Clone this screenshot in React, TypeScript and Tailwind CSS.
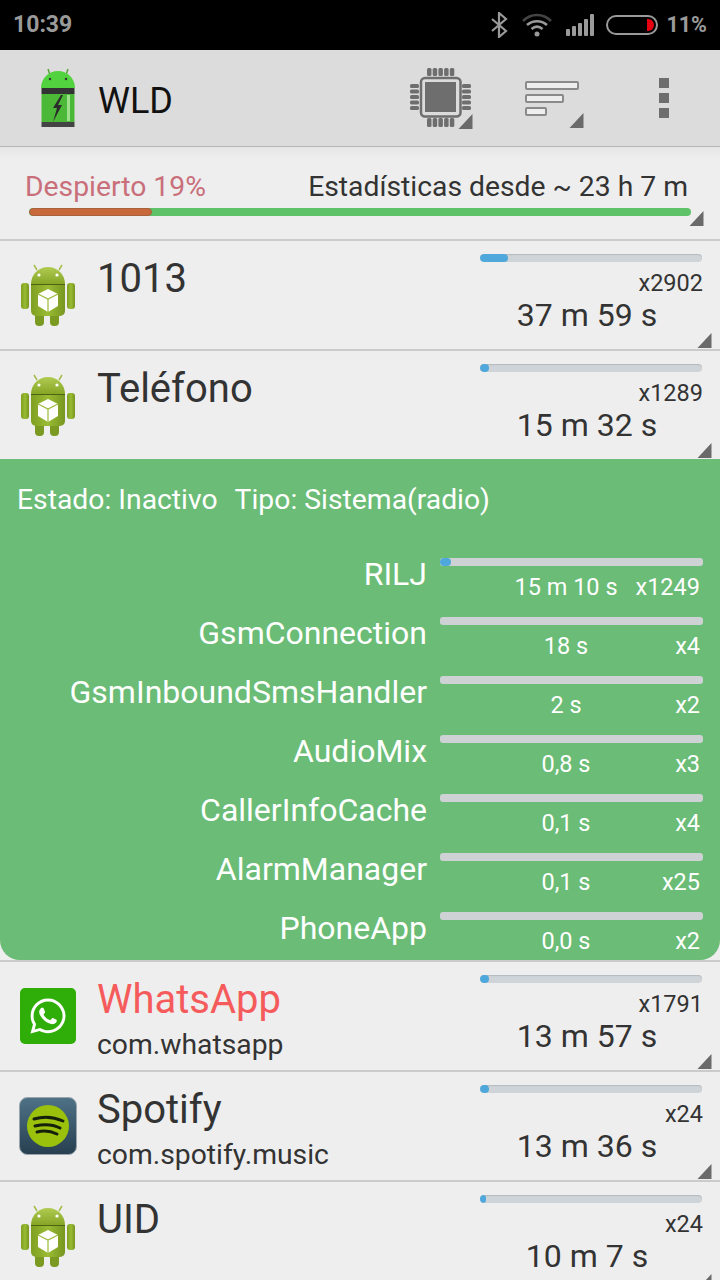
import type { ReactNode } from "react";
import { FaWhatsapp } from "react-icons/fa";

const DETAILS = [
  { name: "RILJ", time: "15 m 10 s", count: "x1249", active: true },
  { name: "GsmConnection", time: "18 s", count: "x4" },
  { name: "GsmInboundSmsHandler", time: "2 s", count: "x2" },
  { name: "AudioMix", time: "0,8 s", count: "x3" },
  { name: "CallerInfoCache", time: "0,1 s", count: "x4" },
  { name: "AlarmManager", time: "0,1 s", count: "x25" },
  { name: "PhoneApp", time: "0,0 s", count: "x2" },
];

function Corner({ className }: { className: string }) {
  return (
    <svg viewBox="0 0 14 15" className={`absolute w-[15px] h-[15px] ${className}`}>
      <path d="M14 0V15H0Z" fill="#6a6a6a" />
    </svg>
  );
}

function AndroidIcon() {
  return (
    <svg viewBox="0 0 54 62" className="w-[54px] h-[62px]">
      <defs>
        <linearGradient id="droid" x1="0" y1="0" x2="1" y2="0">
          <stop offset="0" stopColor="#7f9f22" />
          <stop offset="0.5" stopColor="#9abb33" />
          <stop offset="1" stopColor="#769620" />
        </linearGradient>
        <linearGradient id="droidHead" x1="0" y1="0" x2="0" y2="1">
          <stop offset="0" stopColor="#b0cb52" />
          <stop offset="1" stopColor="#86a626" />
        </linearGradient>
      </defs>
      <path d="M16 6l-3-5M38 6l3-5" stroke="#a3bd4a" strokeWidth="1.5" />
      <path d="M10 20C10 10 18 3 27 3s17 7 17 17Z" fill="url(#droidHead)" />
      <circle cx="18" cy="11" r="1.6" fill="#fff" />
      <circle cx="36" cy="11" r="1.6" fill="#fff" />
      <rect x="0" y="19" width="8" height="26" rx="3" fill="url(#droid)" />
      <rect x="46" y="19" width="8" height="26" rx="3" fill="url(#droid)" />
      <rect x="14" y="46" width="9" height="16" rx="4" fill="#7a9a22" />
      <rect x="29" y="46" width="9" height="16" rx="4" fill="#7a9a22" />
      <rect x="10" y="20" width="34" height="1" fill="#4d6312" />
      <path d="M10 21H44V47a5 5 0 0 1-5 5H15a5 5 0 0 1-5-5Z" fill="url(#droid)" />
      <path d="M27 25l10 5v12l-10 6-10-6V30Z" fill="#fff" />
      <path d="M17 30l10 5 10-5M27 35v13" stroke="#9cba38" strokeWidth="1.2" fill="none" />
    </svg>
  );
}

function BatteryDroid() {
  return (
    <svg viewBox="0 0 36 60" className="w-[36px] h-[60px]">
      <path d="M10 7L8 1M26 7l2-6" stroke="#5aa03a" strokeWidth="1.5" />
      <path d="M1 20C1 10 9 3 18 3s17 7 17 17Z" fill="#52d23e" />
      <circle cx="10" cy="11" r="1.2" fill="#333" />
      <circle cx="26" cy="11" r="1.2" fill="#333" />
      <rect x="1.5" y="20" width="33" height="6" fill="#333" />
      <rect x="1.5" y="26" width="33" height="28" fill="#4cb838" />
      <rect x="27" y="27" width="3" height="26" fill="#9ee08e" />
      <rect x="1.5" y="54" width="33" height="5" fill="#444" />
      <path d="M21 27l-8 13h4l-4 14 9-17h-4l5-10Z" fill="#2b2b2b" />
    </svg>
  );
}

function SpotifyIcon() {
  return (
    <svg viewBox="0 0 58 58" className="w-[58px] h-[58px]">
      <defs>
        <linearGradient id="spot" x1="0" y1="0" x2="0" y2="1">
          <stop offset="0" stopColor="#4f7287" />
          <stop offset="1" stopColor="#273f50" />
        </linearGradient>
      </defs>
      <rect x="0.5" y="0.5" width="57" height="57" rx="8" fill="url(#spot)" stroke="#9aa5ab" />
      <circle cx="29" cy="29" r="21" fill="#9ac20c" />
      <path d="M15 22c10-3 20-2 29 2M16 29c9-2 17-2 25 2M18 35c7-2 14-1 20 2" stroke="#16210c" strokeWidth="3" strokeLinecap="round" fill="none" />
    </svg>
  );
}

function WhatsAppIcon() {
  return (
    <div className="w-[56px] h-[56px] rounded-[5px] bg-[#2fae09] flex items-center justify-center">
      <FaWhatsapp className="text-white w-[40px] h-[40px]" />
    </div>
  );
}

function Row({
  icon,
  title,
  sub,
  count,
  time,
  pct = 9,
  titleColor = "text-[#333]",
}: {
  icon: ReactNode;
  title: string;
  sub?: string;
  count: string;
  time: string;
  pct?: number;
  titleColor?: string;
}) {
  return (
    <div className="relative h-[110px] shrink-0 border-t-2 border-[#cbcbcb] bg-[#eeeeee] flex">
      <div className="w-[97px] shrink-0 flex items-center justify-center pr-[1px]">{icon}</div>
      <div className="flex-1 pt-[13px]">
        <div className={`text-[40px] leading-[50px] ${titleColor}`}>{title}</div>
        {sub && <div className="text-[28.3px] leading-[32px] text-[#333] mt-[4px]">{sub}</div>}
      </div>
      <div className="w-[240px] shrink-0 pt-[13px] pr-[17px]">
        <div className="h-[8px] w-[222px] rounded-full bg-[#cfd4d8] shadow-[inset_0_1px_1px_#b4babf] overflow-hidden">
          <div className="h-full rounded-full bg-[#4fa8dc]" style={{ width: `${pct}px` }} />
        </div>
        <div className="text-right text-[23.5px] leading-[28px] text-[#333] mt-[7px]">{count}</div>
        <div className="text-center text-[32px] leading-[36px] text-[#333] pr-[9px]">{time}</div>
      </div>
      <Corner className="right-[8px] bottom-[1px]" />
    </div>
  );
}

function DetailRow({ name, time, count, active }: (typeof DETAILS)[number]) {
  return (
    <div className="h-[59px] flex pr-[17px]">
      <div className="w-[427px] shrink-0 text-right text-[32px] leading-[32px] text-white pt-[16px]">{name}</div>
      <div className="flex-1 ml-[13px] pt-[16px]">
        <div className="h-[8px] rounded-[3px] bg-[#cfd2d5] overflow-hidden">
          {active && <div className="h-full w-[11px] rounded-full bg-[#4fa8dc]" />}
        </div>
        <div className="flex text-[23.5px] leading-[28px] text-white mt-[7px] pr-[3px]">
          <span className="flex-1 text-center pl-[60px]">{time}</span>
          <span className="w-[68px] text-right">{count}</span>
        </div>
      </div>
    </div>
  );
}

export default function App() {
  return (
    <div className="w-[720px] h-[1280px] overflow-hidden flex flex-col bg-[#eeeeee] font-['Roboto',sans-serif]">
      {/* Status bar */}
      <div className="h-[50px] shrink-0 bg-black flex items-center text-[#9a9a9a] font-bold text-[23px] pl-[13px] pr-[13px]">
        <span>10:39</span>
        <div className="ml-auto flex items-center">
          <svg viewBox="0 0 18 26" className="w-[18px] h-[26px]" fill="none" stroke="#9a9a9a" strokeWidth="2.2">
            <path d="M2 7l14 12-7 6V1l7 6L2 19" />
          </svg>
          <svg viewBox="0 0 32 26" className="w-[32px] h-[26px] ml-[13px]" fill="none" strokeWidth="2.6">
            <path d="M2 9c8-8 20-8 28 0" stroke="#444" />
            <path d="M6 13c6-5 14-5 20 0M10.5 17c3.500-3 7.500-3 11 0" stroke="#9a9a9a" />
            <circle cx="16" cy="22" r="2.500" fill="#9a9a9a" stroke="none" />
          </svg>
          <svg viewBox="0 0 28 22" className="w-[28px] h-[22px] ml-[13px]" fill="#9a9a9a">
            <rect x="0" y="15" width="4" height="7" rx="1" />
            <rect x="6" y="12" width="4" height="10" rx="1" />
            <rect x="12" y="9" width="4" height="13" rx="1" />
            <rect x="18" y="5" width="4" height="17" rx="1" />
            <rect x="24" y="0" width="4" height="22" rx="1" />
          </svg>
          <div className="relative ml-[12px] w-[52px] h-[20px] rounded-full border-2 border-[#9a9a9a] overflow-hidden">
            <div className="absolute right-[2px] top-[2px] w-[7px] h-[12px] rounded-r-full bg-[#e60012]" />
          </div>
          <span className="ml-[8px] text-[21.5px]">11%</span>
        </div>
      </div>

      {/* Toolbar */}
      <div className="relative h-[97px] shrink-0 bg-[#dcdcdc] border-b border-[#b4b4b4] flex items-center">
        <div className="ml-[40px] w-[36px] flex">
          <BatteryDroid />
        </div>
        <span className="ml-[22px] mt-[5px] text-[36px] text-[#111]">WLD</span>
        <div className="relative ml-auto mr-[248px] w-[62px] h-[60px]">
          <svg viewBox="0 0 62 60" className="w-[62px] h-[60px]" fill="#6e6e6e">
            {[0, 1, 2, 3, 4].map((i) => (
              <rect key={`t${i}`} x={17 + i * 5.7} y="0" width="4.500" height="8" rx="1.500" />
            ))}
            {[0, 1, 2, 3, 4].map((i) => (
              <rect key={`b${i}`} x={17 + i * 5.7} y="50" width="4.500" height="9" rx="1.500" />
            ))}
            {[0, 1, 2, 3, 4].map((i) => (
              <rect key={`l${i}`} x="0" y={16 + i * 5.5} width="9" height="4" rx="1.500" />
            ))}
            {[0, 1, 2, 3, 4].map((i) => (
              <rect key={`r${i}`} x="52" y={16 + i * 5.5} width="9" height="4" rx="1.500" />
            ))}
            <rect x="11" y="10" width="39.500" height="38.500" rx="4" fill="none" stroke="#6e6e6e" strokeWidth="2.500" />
            <rect x="15" y="14" width="31" height="30" fill="#6e6e6e" />
          </svg>
          <Corner className="right-[-1px] bottom-[-1px]" />
        </div>
        <div className="absolute left-[525px] top-[31px] flex flex-col gap-[4px]">
          <div className="w-[54px] h-[9px] bg-[#eee] border-2 border-[#8a8a8a] rounded-[2px]" />
          <div className="w-[39px] h-[9px] bg-[#eee] border-2 border-[#8a8a8a] rounded-[2px]" />
          <div className="w-[22px] h-[9px] bg-[#eee] border-2 border-[#8a8a8a] rounded-[2px]" />
        </div>
        <Corner className="left-[569px] top-[63px]" />
        <div className="absolute left-[659px] top-[28px] flex flex-col gap-[5px]">
          <div className="w-[10px] h-[10px] bg-[#6e6e6e]" />
          <div className="w-[10px] h-[10px] bg-[#6e6e6e]" />
          <div className="w-[10px] h-[10px] bg-[#6e6e6e]" />
        </div>
      </div>

      {/* Summary */}
      <div className="relative h-[92px] shrink-0 bg-gradient-to-b from-[#e6e6e6] to-[#eeeeee] to-[12%] px-[25px] pt-[22px]">
        <div className="flex justify-between text-[28.3px] leading-[36px] pr-[7px]">
          <span className="text-[#c96f7a]">Despierto 19%</span>
          <span className="text-[#333]">Estadísticas desde ~ 23 h 7 m</span>
        </div>
        <div className="mt-[3px] ml-[4px] w-[662px] h-[8px] rounded-full bg-[#5ec269] overflow-hidden">
          <div className="h-full w-[123px] rounded-full bg-[#c8693c] border border-[#a8613a]" />
        </div>
        <Corner className="right-[16px] bottom-[13px]" />
      </div>

      <Row icon={<AndroidIcon />} title="1013" count="x2902" time="37 m 59 s" pct={28} />
      <Row icon={<AndroidIcon />} title="Teléfono" count="x1289" time="15 m 32 s" />

      {/* Expanded details */}
      <div className="h-[501px] shrink-0 bg-[#6abc76] rounded-b-[20px] pt-[25px]">
        <div className="text-[28.3px] leading-[32px] text-white pl-[17px] flex gap-[17px]">
          <span>Estado: Inactivo</span>
          <span>Tipo: Sistema(radio)</span>
        </div>
        <div className="mt-[26px]">
          {DETAILS.map((d) => (
            <DetailRow key={d.name} {...d} />
          ))}
        </div>
      </div>

      <Row icon={<WhatsAppIcon />} title="WhatsApp" sub="com.whatsapp" titleColor="text-[#f55b5b]" count="x1791" time="13 m 57 s" />
      <Row icon={<SpotifyIcon />} title="Spotify" sub="com.spotify.music" count="x24" time="13 m 36 s" />
      <Row icon={<AndroidIcon />} title="UID" count="x24" time="10 m 7 s" pct={6} />
    </div>
  );
}
